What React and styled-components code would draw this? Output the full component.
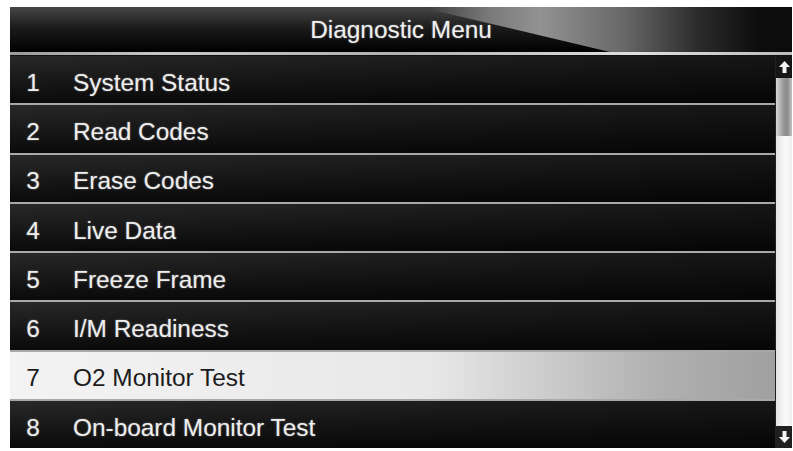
import styled, { createGlobalStyle } from "styled-components";

const items = [
  "System Status",
  "Read Codes",
  "Erase Codes",
  "Live Data",
  "Freeze Frame",
  "I/M Readiness",
  "O2 Monitor Test",
  "On-board Monitor Test",
];

const selectedIndex = 6;

const GlobalStyle = createGlobalStyle`
  html, body {
    margin: 0;
    padding: 0;
    background: #ffffff;
  }
  body {
    font-family: "Liberation Sans", Arial, sans-serif;
  }
`;

const Page = styled.div`
  padding: 7px 0 0 10px;
`;

const Screen = styled.div`
  width: 782px;
  height: 441px;
  display: flex;
  flex-direction: column;
  background: #000;
  overflow: hidden;
`;

const Header = styled.div`
  position: relative;
  height: 45px;
  display: flex;
  align-items: center;
  justify-content: center;
  background: linear-gradient(180deg, #474747 0%, #1c1c1c 45%, #000 100%);

  &::after {
    content: "";
    position: absolute;
    top: 0;
    left: 410px;
    right: 0;
    bottom: 0;
    background: linear-gradient(
      90deg,
      #3a3a3a 0px,
      #7a7a7a 70px,
      #929292 120px,
      #6a6a6a 200px,
      #2a2a2a 280px,
      #0c0c0c 340px
    );
    clip-path: polygon(0 0, 100% 0, 100% 100%, 190px 100%);
  }
`;

const Title = styled.h1`
  position: relative;
  z-index: 1;
  margin: 0;
  padding-top: 1px;
  font-size: 24.4px;
  font-weight: normal;
  color: #f0f0f0;
  text-shadow: 0 0 2px rgba(255, 255, 255, 0.4);
`;

const HeaderRule = styled.div`
  height: 3px;
  background: linear-gradient(
    90deg,
    #9a9a9a 0%,
    #c8c8c8 20%,
    #b0b0b0 50%,
    #e0e0e0 80%,
    #bdbdbd 100%
  );
  border-bottom: 1px solid #111;
`;

const Body = styled.div`
  flex: 1;
  display: flex;
`;

const List = styled.ul`
  flex: 1;
  margin: 0;
  padding: 0;
  list-style: none;
  display: flex;
  flex-direction: column;
`;

const Row = styled.li`
  height: 49.3px;
  flex-shrink: 0;
  box-sizing: border-box;
  padding-top: 6px;
  display: flex;
  align-items: center;
  gap: 17px;
  font-size: 24.4px;
  border-bottom: 2px solid #a9a9a9;
  color: ${(p) => (p.$selected ? "#1c1c1c" : "#eeeeee")};
  text-shadow: ${(p) =>
    p.$selected ? "none" : "0 0 2px rgba(255, 255, 255, 0.4)"};
  background: ${(p) =>
    p.$selected
      ? "linear-gradient(90deg, #f3f3f3 0%, #e8e8e8 55%, #b0b0b0 85%, #a0a0a0 100%)"
      : "linear-gradient(90deg, rgba(0,0,0,0) 0%, rgba(0,0,0,0.45) 100%), linear-gradient(180deg, #282828 0%, #161616 60%, #0a0a0a 100%)"};

  &:last-child {
    border-bottom: none;
    flex: 1;
  }
`;

const Num = styled.span`
  width: 46px;
  text-align: center;
`;

const ScrollBar = styled.div`
  width: 16px;
  display: flex;
  flex-direction: column;
  background: #f1f1f1;
  border-left: 1px solid #222;
`;

const ArrowBox = styled.div`
  height: 22px;
  display: flex;
  align-items: center;
  justify-content: center;
  background: ${(p) => (p.$down ? "#202020" : "#151515")};
`;

const Thumb = styled.div`
  height: 58px;
  background: linear-gradient(90deg, #d8d8d8 0%, #9a9a9a 45%, #8a8a8a 70%, #c4c4c4 100%);
`;

const Track = styled.div`
  flex: 1;
  background: linear-gradient(90deg, #e4e4e4 0%, #fafafa 60%, #efefef 100%);
`;

const Arrow = ({ down }) => (
  <svg width="11" height="12" viewBox="0 0 11 12">
    <path
      d={down ? "M3.5 0H7.5V6H11L5.5 12L0 6H3.5Z" : "M3.5 12H7.5V6H11L5.5 0L0 6H3.5Z"}
      fill="#f4f4f4"
    />
  </svg>
);

export default function App() {
  return (
    <Page>
      <GlobalStyle />
      <Screen>
        <Header>
          <Title>Diagnostic Menu</Title>
        </Header>
        <HeaderRule />
        <Body>
          <List>
            {items.map((item, i) => (
              <Row key={item} $selected={i === selectedIndex}>
                <Num>{i + 1}</Num>
                <span>{item}</span>
              </Row>
            ))}
          </List>
          <ScrollBar>
            <ArrowBox>
              <Arrow />
            </ArrowBox>
            <Thumb />
            <Track />
            <ArrowBox $down>
              <Arrow down />
            </ArrowBox>
          </ScrollBar>
        </Body>
      </Screen>
    </Page>
  );
}
